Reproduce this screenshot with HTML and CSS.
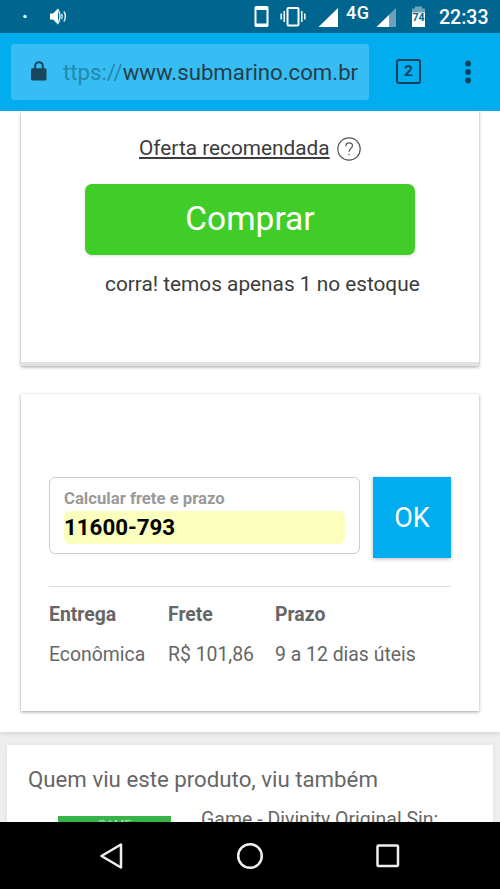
FILE: index.html
```html
<!DOCTYPE html>
<html lang="pt-BR">
<head>
<meta charset="utf-8">
<title>Submarino</title>
<link rel="stylesheet" href="styles.css">
</head>
<body>
<div class="phone">
  <header class="status">
    <svg class="status-left" width="80" height="33" viewBox="0 0 80 33">
      <circle cx="25" cy="16.5" r="1.8" fill="#d9f1f7"/>
      <path d="M50 13.500h3l5-5v16l-5-5h-3z" fill="#fff"/>
      <path d="M57.500 9q2.500 3 2.500 7.500t-2.500 7.500M61.500 14q1.500 2.500 0 5M64 11.500q2.800 4.800 0 9.800" fill="none" stroke="#d5edf4" stroke-width="1.500"/>
    </svg>
    <svg class="status-icons" width="114" height="33" viewBox="250 0 114 33">
      <path fill-rule="evenodd" fill="#fff" d="M256 6h11q1.500 0 1.500 1.500v18q0 1.500-1.500 1.500h-11q-1.500 0-1.500-1.500v-18q0-1.500 1.500-1.500zM256.500 10v13.500h10V10z"/>
      <g fill="none" stroke="#fff"><rect x="287.500" y="8" width="11" height="17.500" rx="1" stroke-width="2"/><path d="M284.200 11v11M281.200 13.500v6M301.800 11v11M304.800 13.500v6" stroke-width="1.500"/></g>
      <path d="M338 8v19h-19.500z" fill="#fff"/>
    </svg>
    <span class="network">4G</span>
    <svg class="status-right" width="52" height="33" viewBox="374 0 52 33">
      <path d="M396 8v19h-19.500z" fill="#6ba4ba"/>
      <path d="M389 15v12h-12.500z" fill="#fff"/>
      <path d="M415 6.500h7v2h3v5h-13v-5h3z" fill="#6ba4ba"/>
      <path d="M412 12.500h13V27h-13z" fill="#fff"/>
      <text x="418.500" y="20.500" text-anchor="middle" class="battery-text">74</text>
    </svg>
    <span class="clock">22:33</span>
  </header>
  <div class="toolbar">
    <div class="address">
      <svg class="lock" width="16" height="20" viewBox="0 0 16 20"><path d="M4.200 8V5a3.800 3.800 0 0 1 7.600 0v3" fill="none" stroke="#17465d" stroke-width="2"/><rect x="0" y="7.200" width="15.500" height="12.300" rx="1.500" fill="#17465d"/></svg>
      <span class="url"><span class="scheme">ttps://</span>www.submarino.com.br</span>
    </div>
    <div class="tabs">2</div>
    <svg class="more" width="6" height="24" viewBox="0 0 6 24" fill="#0b415a"><circle cx="3" cy="3.500" r="2.900"/><circle cx="3" cy="12" r="2.900"/><circle cx="3" cy="20.500" r="2.900"/></svg>
  </div>
  <main class="page">
    <div class="product">
      <section class="card buy">
        <div class="offer"><a class="offer-link">Oferta recomendada</a><svg width="24" height="24" viewBox="0 0 24 24" fill="none" stroke="#555" stroke-width="1.200"><circle cx="12" cy="12" r="11.200"/><path d="M8.800 9.300c0-4.600 6.700-4.400 6.700-.6 0 2.600-3.400 2.700-3.400 6"/><path d="M12.100 16.800v1.400"/></svg></div>
        <div class="buy-button">Comprar</div>
        <p class="stock">corra! temos apenas 1 no estoque</p>
      </section>
      <section class="card shipping">
        <div class="form">
          <div class="field"><label class="label">Calcular frete e prazo</label><div class="value">11600-793</div></div>
          <div class="ok">OK</div>
        </div>
        <div class="rates">
          <b>Entrega</b><b>Frete</b><b>Prazo</b>
          <span>Econômica</span><span>R$ 101,86</span><span>9 a 12 dias úteis</span>
        </div>
      </section>
    </div>
    <section class="related">
      <h2 class="heading">Quem viu este produto, viu também</h2>
      <div class="item"><div class="cover">GAME</div><span class="item-name">Game - Divinity Original Sin:</span></div>
    </section>
  </main>
  <nav class="nav">
    <svg width="24" height="28" viewBox="0 0 24 28"><path d="M21 2.500v23L1.500 14z"/></svg>
    <svg width="28" height="28" viewBox="0 0 28 28"><circle cx="14" cy="14" r="11.800"/></svg>
    <svg width="24" height="28" viewBox="0 0 24 28"><rect x="1.500" y="3.500" width="20.500" height="20.500" rx="1"/></svg>
  </nav>
</div>
</body>
</html>
```

FILE: styles.css
```css
* { box-sizing: border-box; }
body { margin: 0; font-family: Roboto, sans-serif; color: #3c3c3c; }
.phone { width: 500px; height: 889px; display: flex; flex-direction: column; overflow: hidden; background: #fff; white-space: nowrap; }
svg { display: block; flex: none; }

.status { height: 33px; flex: none; display: flex; background: #00668f; color: #fff; }
.status-icons { margin-left: 170px; }
.network { width: 10px; margin-left: -18px; font-size: 18px; line-height: 25px; font-weight: 500; letter-spacing: .6px; }
.status-right { margin-left: 18px; }
.battery-text { font-size: 10.500px; font-weight: 700; fill: #00668f; }
.clock { margin-left: 13px; font-size: 19.500px; line-height: 35px; font-weight: 500; }

.toolbar { height: 78px; flex: none; display: flex; align-items: center; padding-left: 11px; background: #02adef; }
.address { width: 358px; height: 56px; margin-bottom: 1px; border-radius: 3px; background: #36bdf3; display: flex; align-items: center; padding-left: 20px; }
.lock { margin-bottom: 1px; }
.url { margin-left: 16px; font-size: 22.200px; color: #263e49; }
.scheme { color: #2488ad; }
.tabs { width: 25px; height: 25px; margin-left: 27px; margin-bottom: 1px; border: 2.500px solid #0b415a; border-radius: 3px; color: #0b415a; font-size: 15.500px; line-height: 21px; font-weight: 700; text-align: center; }
.more { margin-left: 44px; margin-bottom: 1px; }

.page { height: 711px; flex: none; overflow: hidden; background: #eee; }
.product { height: 621px; padding: 0 20px; background: #fff; box-shadow: 0 1px 5px #ccc; }
.card { background: #fff; box-shadow: 0 1px 3px rgba(0,0,0,.38); }
.buy { height: 255px; margin: 0 1px; padding-top: 23px; border-bottom: 4px solid #e2e2e2; }
.offer { height: 28px; padding-left: 118px; display: flex; align-items: center; gap: 7px; }
.offer svg { margin-top: 2px; }
.offer-link { font-size: 20.800px; line-height: 26px; text-decoration: underline; text-underline-offset: 2px; text-decoration-thickness: 1.500px; }
.buy-button { width: 330px; height: 71px; margin: 22px 0 0 64px; border-radius: 7px; background: #40cd28; color: #fff; font-size: 33.500px; line-height: 70px; text-align: center; box-shadow: 0 1px 3px #ddd; }
.stock { margin: 15px 0 0 84px; font-size: 20.800px; line-height: 28px; }
.shipping { height: 317px; margin: 28px 1px 0; padding: 83px 28px 0; }
.form { height: 110px; display: flex; justify-content: space-between; align-items: flex-start; border-bottom: 1px solid #ddd; }
.field { width: 311px; height: 77px; padding: 10px 14px 0; border: 1.500px solid #ccc; border-radius: 6px; }
.label { display: block; height: 23px; font-size: 16.700px; line-height: 21px; font-weight: 700; color: #999; }
.value { height: 33px; border-radius: 6px; background: #faffbd; color: #000; font-size: 22.300px; line-height: 32px; font-weight: 700; }
.ok { width: 78px; height: 81px; background: #02adef; color: #fff; font-size: 27px; line-height: 83px; text-align: center; box-shadow: 0 1px 4px #bbb; }
.rates { display: grid; grid-template-columns: 119px 107px auto; grid-auto-rows: 40px; padding-top: 8px; font-size: 19.400px; line-height: 40px; color: #666; }

.related { width: 486px; height: 80px; margin: 13px 0 0 7px; padding: 19px 21px 0; background: #fff; box-shadow: 0 1px 4px #ddd; color: #666; }
.heading { margin: 0; font-size: 22.250px; line-height: 30px; font-weight: 400; }
.item { display: flex; align-items: flex-start; padding-top: 13px; }
.cover { width: 113px; height: 30px; margin: 9px 0 0 30px; background: #36b44a; color: #a9dfb0; font-size: 12px; line-height: 18px; text-align: center; }
.item-name { margin-left: 30px; font-size: 19.500px; line-height: 26px; }

.nav { height: 67px; flex: none; display: flex; align-items: center; padding-left: 100px; gap: 112px; background: #000; }
.nav svg { fill: none; stroke: #eee; stroke-width: 2.500; stroke-linejoin: round; }
```
